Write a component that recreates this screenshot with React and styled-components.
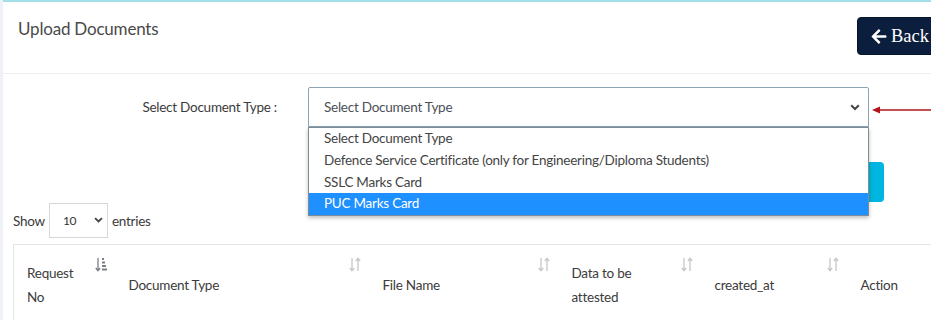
import React from "react";
import styled, { createGlobalStyle } from "styled-components";

const Global = createGlobalStyle`
  html, body { margin: 0; padding: 0; background: #eef1f5; }
  body { font-family: "Lato", "Noto Sans", sans-serif; color: #343a40; letter-spacing: -0.25px; }
  #root { width: 931px; height: 320px; overflow: hidden; }
  * { box-sizing: border-box; }
`;

const Page = styled.div`
  padding-left: 3px;
  height: 320px;
`;

const Card = styled.div`
  width: 960px;
  height: 320px;
  background: #fff;
  border-top: 2px solid #a3dfe9;
`;

const CardHeader = styled.div`
  height: 72px;
  display: flex;
  align-items: flex-start;
  justify-content: space-between;
  padding: 15px 0 0 15px;
  border-bottom: 1px solid #eceef0;
`;

const Title = styled.h3`
  margin: 0;
  font-size: 17px;
  font-weight: 400;
  line-height: 24px;
  letter-spacing: -0.2px;
  color: #4a4a4a;
`;

const BackButton = styled.button`
  display: flex;
  align-items: center;
  gap: 4px;
  width: 92px;
  height: 38px;
  margin-right: 14px;
  padding: 0 10px 0 13px;
  background: #0b1e3e;
  border: 1px solid #07152c;
  border-radius: 4px;
  color: #fff;
  font-family: "Liberation Serif", "Times New Roman", serif;
  font-size: 18.5px;
  letter-spacing: 0;
  cursor: pointer;
`;

const Body = styled.div`
  padding: 13px 0 0 10px;
`;

const FormRow = styled.div`
  position: relative;
  display: flex;
  align-items: center;
  height: 40px;
`;

const Label = styled.label`
  width: 264px;
  text-align: right;
  font-size: 13.5px;
  color: #3b3b3b;
  margin-right: 31px;
`;

const SelectBox = styled.div`
  position: relative;
  width: 561px;
  height: 40px;
  display: flex;
  align-items: center;
  justify-content: space-between;
  padding: 0 8px 0 15px;
  border: 1px solid #8aa3b5;
  border-radius: 2px 2px 0 0;
  background: #fff;
  font-size: 13.5px;
  color: #495057;
`;

const Menu = styled.ul`
  position: absolute;
  left: -1px;
  top: 39px;
  width: 561px;
  margin: 0;
  padding: 0;
  list-style: none;
  background: #fff;
  border: 1px solid #7f8c96;
  box-shadow: 0 2px 4px rgba(0, 0, 0, 0.25);
  z-index: 5;
`;

const Option = styled.li`
  height: 21.75px;
  line-height: 21.75px;
  padding-left: 15px;
  font-size: 13.5px;
  color: ${(p) => (p.$active ? "#fff" : "#444")};
  background: ${(p) => (p.$active ? "#1e90ff" : "transparent")};
  white-space: nowrap;
`;

const ButtonRow = styled.div`
  height: 40px;
  margin-top: 35px;
  padding-left: 807px;
`;

const UploadButton = styled.div`
  width: 64px;
  height: 40px;
  background: #00b6e0;
  border-radius: 4px;
`;

const ShowRow = styled.div`
  display: flex;
  align-items: center;
  gap: 4px;
  margin-top: 1px;
  height: 35px;
  font-size: 13.5px;
  color: #3b3b3b;
`;

const SmallSelect = styled.div`
  width: 59px;
  height: 35px;
  display: flex;
  align-items: center;
  justify-content: space-between;
  padding: 0 4px 0 13px;
  border: 1px solid #d4d8dc;
  font-size: 12px;
  color: #333;
`;

const Table = styled.table`
  margin-top: 6px;
  border-collapse: collapse;
  border-top: 1px solid #e3e6e9;
  border-left: 1px solid #e3e6e9;
  table-layout: fixed;
  width: 940px;
`;

const Th = styled.th`
  position: relative;
  width: ${(p) => p.$w}px;
  height: 80px;
  padding: 4px 28px 4px 13px;
  text-align: left;
  vertical-align: middle;
  font-size: 13.5px;
  font-weight: 400;
  line-height: 24px;
  color: #3b3b3b;
`;

const SortIcon = styled.svg`
  position: absolute;
  top: 12px;
  right: 9px;
`;

const Chevron = ({ size = 10 }) => (
  <svg width={size} height={size * 0.7} viewBox="0 0 10 7">
    <path d="M1.2 1.2 L5 5 L8.8 1.2" fill="none" stroke="#444" strokeWidth="2" />
  </svg>
);

const SortBoth = () => (
  <SortIcon width="12" height="15" viewBox="0 0 12 15">
    <g stroke="#c4c8cc" strokeWidth="1.3" fill="none">
      <path d="M3 1 V13.5 M0.8 11 L3 13.8 L5.2 11" />
      <path d="M9 14 V1.5 M6.8 4 L9 1.2 L11.2 4" />
    </g>
  </SortIcon>
);

const SortActive = () => (
  <SortIcon width="12" height="15" viewBox="0 0 12 15">
    <g stroke="#7a7f85" strokeWidth="1.3" fill="none">
      <path d="M3 1 V13.5 M0.8 11 L3 13.8 L5.2 11" />
    </g>
    <g fill="#7a7f85">
      <rect x="7" y="1" width="2" height="2" />
      <rect x="7" y="4.5" width="3" height="2" />
      <rect x="7" y="8" width="4" height="2" />
      <rect x="7" y="11.5" width="5" height="2" />
    </g>
  </SortIcon>
);

const ArrowNote = styled.svg`
  margin-left: 2px;
  margin-top: 6px;
`;

const cols = [
  { label: <>Request<br />No</>, w: 102, active: true },
  { label: "Document Type", w: 254 },
  { label: "File Name", w: 189 },
  { label: <>Data to be<br />attested</>, w: 143 },
  { label: "created_at", w: 146 },
  { label: "Action", w: 106 },
];

const options = [
  "Select Document Type",
  "Defence Service Certificate (only for Engineering/Diploma Students)",
  "SSLC Marks Card",
  "PUC Marks Card",
];

export default function App() {
  return (
    <>
      <Global />
      <Page>
        <Card>
          <CardHeader>
            <Title>Upload Documents</Title>
            <BackButton>
              <svg width="16" height="17" viewBox="0 0 448 512">
                <path
                  fill="#fff"
                  d="M257.5 445.1l-22.2 22.2c-9.4 9.4-24.6 9.4-33.9 0L7 273c-9.4-9.4-9.4-24.6 0-33.9L201.4 44.7c9.4-9.4 24.6-9.4 33.9 0l22.2 22.2c9.5 9.5 9.300 25-.4 34.3L136.6 216H424c13.3 0 24 10.7 24 24v32c0 13.3-10.7 24-24 24H136.6l120.5 114.8c9.8 9.3 10 24.8.4 34.3z"
                />
              </svg>
              Back
            </BackButton>
          </CardHeader>
          <Body>
            <FormRow>
              <Label>Select Document Type :</Label>
              <SelectBox>
                <span>Select Document Type</span>
                <Chevron />
                <Menu>
                  {options.map((o, i) => (
                    <Option key={o} $active={i === 3}>
                      {o}
                    </Option>
                  ))}
                </Menu>
              </SelectBox>
              <ArrowNote width="62" height="10" viewBox="0 0 62 10">
                <path d="M8 5 H62" stroke="#b3141b" strokeWidth="1.6" />
                <path d="M1 5 L9 1.5 L9 8.5 Z" fill="#b3141b" />
              </ArrowNote>
            </FormRow>
            <ButtonRow>
              <UploadButton />
            </ButtonRow>
            <ShowRow>
              <span>Show</span>
              <SmallSelect>
                <span>10</span>
                <Chevron size={9} />
              </SmallSelect>
              <span>entries</span>
            </ShowRow>
            <Table>
              <thead>
                <tr>
                  {cols.map((c, i) => (
                    <Th key={i} $w={c.w}>
                      {c.label}
                      {c.active ? <SortActive /> : <SortBoth />}
                    </Th>
                  ))}
                </tr>
              </thead>
            </Table>
          </Body>
        </Card>
      </Page>
    </>
  );
}
